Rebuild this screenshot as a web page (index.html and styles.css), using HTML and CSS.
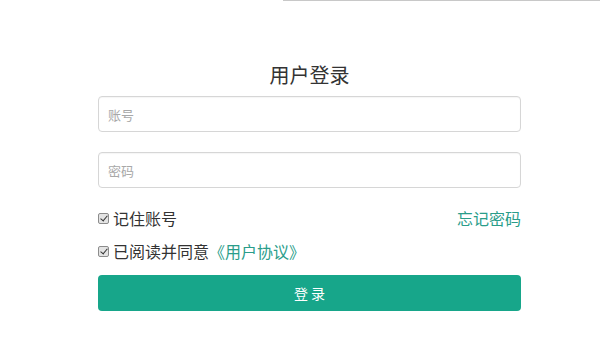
FILE: index.html
```html
<!DOCTYPE html>
<html>
<head>
    <title>用户登录</title>
    <link rel="stylesheet" href="styles.css">
</head>
<body>
    <div class="top-line"></div>
    <div class="login">
        <h1 class="login-title">用户登录</h1>
        <input class="field" type="text" placeholder="账号">
        <input class="field" type="password" placeholder="密码">
        <div class="row">
            <label class="check"><input type="checkbox" checked> 记住账号</label>
            <a class="link" href="#">忘记密码</a>
        </div>
        <div class="row">
            <label class="check"><input type="checkbox" checked> 已阅读并同意<a class="link" href="#">《用户协议》</a></label>
        </div>
        <button class="btn">登 录</button>
    </div>
</body>
</html>
```

FILE: styles.css
```css
body {
    margin: 0;
    font-family: "Noto Sans CJK SC", "Noto Sans", sans-serif;
    color: #333;
    background: #fff;
}
.top-line {
    margin-left: 283px;
    height: 1px;
    background: #c8c8c8;
}
.login {
    width: 423px;
    margin-left: 98px;
    padding-top: 61px;
}
.login-title {
    margin: 0 0 8px;
    font-size: 20px;
    font-weight: normal;
    line-height: 26px;
    text-align: center;
    color: #333;
}
.field {
    display: block;
    box-sizing: border-box;
    width: 100%;
    height: 36px;
    margin-bottom: 20px;
    padding: 0 9px;
    border: 1px solid #d6d6d6;
    border-radius: 4px;
    box-shadow: inset 0 1px 1px rgba(0,0,0,0.04);
    font-family: inherit;
    font-size: 13px;
    outline: none;
}
.field::placeholder {
    color: #a8a8a8;
}
.row {
    display: flex;
    justify-content: space-between;
    align-items: center;
    height: 20px;
    font-size: 16px;
    line-height: 20px;
}
.row:first-of-type {
    margin-top: 2px;
}
.row + .row {
    margin-top: 13px;
}
.check {
    display: flex;
    align-items: center;
    color: #333;
}
.check input {
    appearance: none;
    box-sizing: border-box;
    position: relative;
    width: 11px;
    height: 11px;
    margin: 0 4px 0 0;
    border: 1px solid #8c8c8c;
    border-radius: 2px;
    background: #e4e4e4;
}
.check input:checked::after {
    content: "";
    position: absolute;
    left: 3px;
    top: 0;
    width: 3px;
    height: 6px;
    border: solid #333;
    border-width: 0 1.5px 1.5px 0;
    transform: rotate(40deg);
}
.link {
    color: #2a9d8a;
    text-decoration: none;
}
.btn {
    display: block;
    width: 100%;
    height: 36px;
    margin-top: 14px;
    border: none;
    border-radius: 4px;
    background: #17a68a;
    color: #fff;
    font-family: inherit;
    font-size: 14px;
    cursor: pointer;
}
```
